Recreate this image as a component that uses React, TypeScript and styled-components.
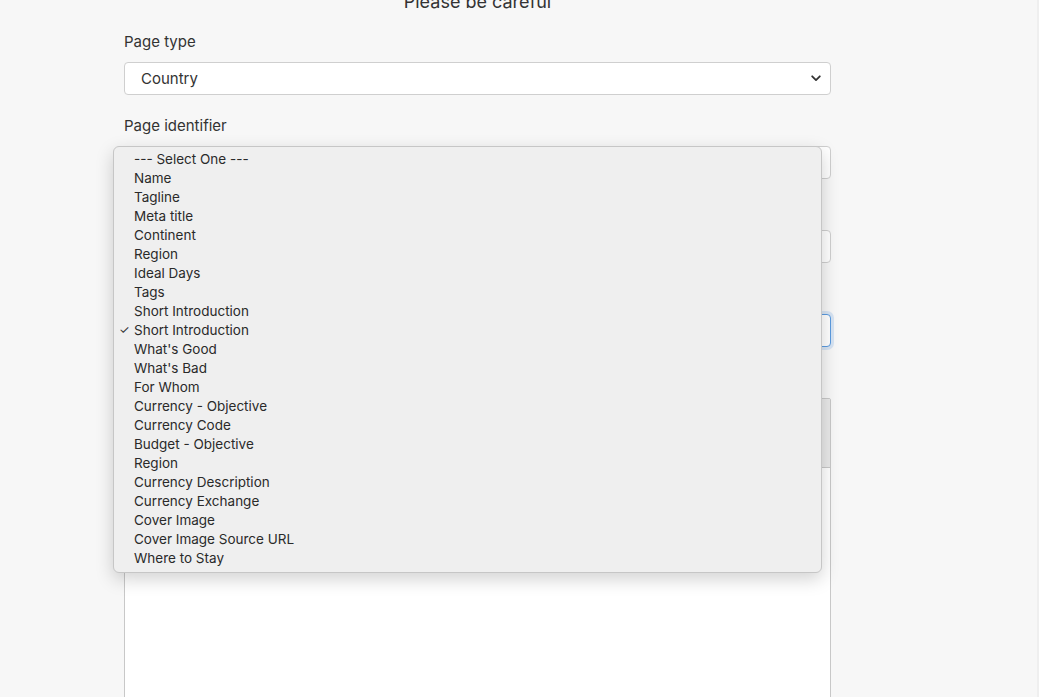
import styled, { createGlobalStyle } from 'styled-components';

const GlobalStyle = createGlobalStyle`
  html, body {
    margin: 0;
    padding: 0;
    background: #f7f7f7;
    overflow: hidden;
  }
  body {
    font-family: Inter, "Noto Sans", sans-serif;
    color: #333;
  }
`;

const pageIdentifiers = [
  `--- Select One ---`,
  `Name`,
  `Tagline`,
  `Meta title`,
  `Continent`,
  `Region`,
  `Ideal Days`,
  `Tags`,
  `Short Introduction`,
  `Short Introduction`,
  `What's Good`,
  `What's Bad`,
  `For Whom`,
  `Currency - Objective`,
  `Currency Code`,
  `Budget - Objective`,
  `Region`,
  `Currency Description`,
  `Currency Exchange`,
  `Cover Image`,
  `Cover Image Source URL`,
  `Where to Stay`,
];

const Chevron = () => (
  <svg width="10" height="7" viewBox="0 0 10 7" fill="none">
    <path d="M1.2 1.3L5 5.1L8.8 1.3" stroke="#333" strokeWidth="1.8" strokeLinecap="round" strokeLinejoin="round" />
  </svg>
);

const App = () => {
  const selectedIndex = 9;
  return (
    <Screen>
      <GlobalStyle />
      <Form>
        <Heading>Please be careful</Heading>

        <Field>
          <Label>Page type</Label>
          <Select>
            <span>Country</span>
            <Chevron />
          </Select>
        </Field>

        <Field>
          <Label>Page identifier</Label>
          <Select>
            <span>Short Introduction</span>
            <Chevron />
          </Select>
          <Menu>
            {pageIdentifiers.map((item, i) => (
              <Option key={i}>
                <Check>{i === selectedIndex ? '✓' : ''}</Check>
                {item}
              </Option>
            ))}
          </Menu>
        </Field>

        <Field>
          <Label>Language</Label>
          <Select>
            <span>English</span>
            <Chevron />
          </Select>
        </Field>

        <Field>
          <Label>Section</Label>
          <Select focused>
            <span>Short Introduction</span>
            <Chevron />
          </Select>
        </Field>

        <Field>
          <Label>Content</Label>
          <Editor>
            <Toolbar />
            <EditorBody />
          </Editor>
        </Field>
      </Form>
    </Screen>
  );
};

const Screen = styled.div`
  width: 100%;
  height: 100vh;
  box-sizing: border-box;
  border-right: 2px solid #efefef;
  overflow: hidden;
`;

const Form = styled.div`
  position: relative;
  width: 707px;
  margin-left: 124px;
  display: flex;
  flex-direction: column;
`;

const Heading = styled.h2`
  margin: -11px 0 17px;
  text-align: center;
  font-size: 18px;
  font-weight: 400;
  line-height: 26px;
  color: #333;
`;

const Field = styled.div`
  display: flex;
  flex-direction: column;
  margin-bottom: 21px;
`;

const Label = styled.label`
  font-size: 15px;
  line-height: 20px;
  color: #333;
  margin-bottom: 10px;
`;

const Select = styled.div<{ focused?: boolean }>`
  height: 33px;
  box-sizing: border-box;
  display: flex;
  align-items: center;
  justify-content: space-between;
  padding: 0 9px 0 16px;
  background: #fff;
  border: 1px solid ${({ focused }) => (focused ? '#5b9be0' : '#cfcfcf')};
  border-radius: 4px;
  box-shadow: ${({ focused }) => (focused ? '0 0 0 3px rgba(120, 170, 230, 0.25)' : 'none')};
  font-size: 15px;
  color: #333;
`;

const Menu = styled.div`
  position: absolute;
  top: 146px;
  left: -11px;
  width: 709px;
  box-sizing: border-box;
  padding: 2px 0 5px;
  background: #efefef;
  border: 1px solid #c6c6c6;
  border-radius: 6px;
  box-shadow: 0 6px 18px rgba(0, 0, 0, 0.18);
  z-index: 10;
`;

const Option = styled.div`
  display: flex;
  align-items: center;
  height: 19px;
  font-family: Inter, "Noto Sans", sans-serif;
  font-size: 13.5px;
  color: #2a2a2a;
`;

const Check = styled.span`
  width: 20px;
  padding-left: 5px;
  box-sizing: border-box;
  font-size: 12px;
  color: #333;
`;

const Editor = styled.div`
  display: flex;
  flex-direction: column;
  border: 1px solid #c8c8c8;
  border-radius: 2px;
`;

const Toolbar = styled.div`
  height: 68px;
  background: #e9e9e9;
  border-bottom: 1px solid #c8c8c8;
`;

const EditorBody = styled.div`
  height: 400px;
  background: #fff;
`;

export default App;
